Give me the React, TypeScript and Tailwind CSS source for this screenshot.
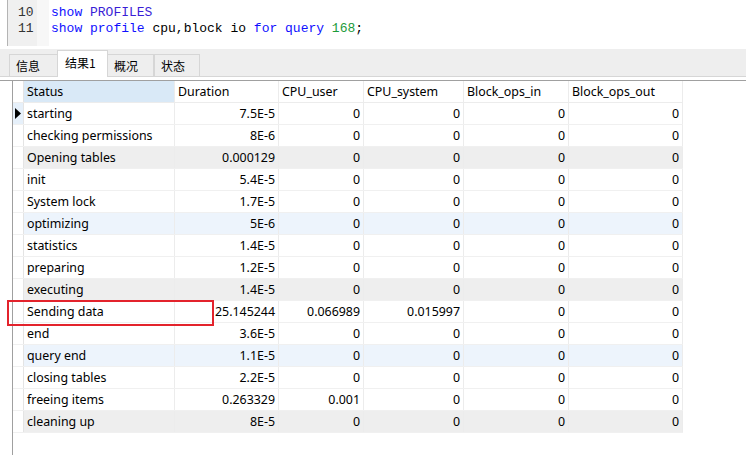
import React from 'react'

const cols = [
  { key: 'status', label: 'Status', w: 'w-[151px]' },
  { key: 'duration', label: 'Duration', w: 'w-[104px]' },
  { key: 'cpu_user', label: 'CPU_user', w: 'w-[85px]' },
  { key: 'cpu_system', label: 'CPU_system', w: 'w-[100px]' },
  { key: 'in', label: 'Block_ops_in', w: 'w-[105px]' },
  { key: 'out', label: 'Block_ops_out', w: 'w-[114px]' },
]

const rows: [string, string, string, string, string, string][] = [
  ['starting', '7.5E-5', '0', '0', '0', '0'],
  ['checking permissions', '8E-6', '0', '0', '0', '0'],
  ['Opening tables', '0.000129', '0', '0', '0', '0'],
  ['init', '5.4E-5', '0', '0', '0', '0'],
  ['System lock', '1.7E-5', '0', '0', '0', '0'],
  ['optimizing', '5E-6', '0', '0', '0', '0'],
  ['statistics', '1.4E-5', '0', '0', '0', '0'],
  ['preparing', '1.2E-5', '0', '0', '0', '0'],
  ['executing', '1.4E-5', '0', '0', '0', '0'],
  ['Sending data', '25.145244', '0.066989', '0.015997', '0', '0'],
  ['end', '3.6E-5', '0', '0', '0', '0'],
  ['query end', '1.1E-5', '0', '0', '0', '0'],
  ['closing tables', '2.2E-5', '0', '0', '0', '0'],
  ['freeing items', '0.263329', '0.001', '0', '0', '0'],
  ['cleaning up', '8E-5', '0', '0', '0', '0'],
]

function rowBg(i: number) {
  if (i % 3 !== 2) return 'bg-white'
  return (i / 3) % 2 < 1 ? 'bg-[#eeeeee]' : 'bg-[#edf4fc]'
}

function Editor() {
  return (
    <div className="flex h-[46px] font-['Liberation_Mono',monospace] text-[13px] leading-[16px]">
      <div className="w-[8px] border-r border-[#b4b4b4]" />
      <div className="w-[29px] bg-[#f0f0f0] pt-[5px] pl-[10px] text-[#333]">
        <div>10</div>
        <div>11</div>
      </div>
      <div className="w-[12px] bg-[#f7f7f7]" />
      <div className="flex-1 bg-white pt-[5px] pl-[2px]">
        <div>
          <span className="text-[#1010ff]">show </span>
          <span className="text-[#3a1ed6]">PROFILES</span>
        </div>
        <div>
          <span className="text-[#1010ff]">show profile </span>
          <span className="text-black">cpu,block io </span>
          <span className="text-[#1010ff]">for query </span>
          <span className="text-[#1c9a3a]">168</span>
          <span className="text-black">;</span>
        </div>
      </div>
    </div>
  )
}

function Tabs() {
  const tabs = ['信息', '结果1', '概况', '状态']
  return (
    <div className="mt-[3px] flex h-[28px] items-end border-b border-[#d6d6d6] bg-[#eeeeee] pl-[9px] font-['Noto_Sans_CJK_SC',sans-serif] text-[12px]">
      {tabs.map((t, i) =>
        i === 1 ? (
          <div key={t} className="-mb-px flex h-[27px] w-[51px] items-start border-x border-t border-[#d6d6d6] bg-white pt-[3px] pl-[7px] text-black">
            {t}
          </div>
        ) : (
          <div key={t} className={`flex h-[22px] items-center border border-b-0 border-[#d6d6d6] pl-[6px] text-black ${i === 0 ? 'w-[48px] border-r-0' : 'w-[46px]'} ${i === 2 ? 'border-l-0' : ''}`}>
            {t}
          </div>
        ),
      )}
    </div>
  )
}

function Grid() {
  return (
    <div className="mt-[3px] flex h-[375px] border-t border-[#a0a0a0] font-['Noto_Sans',sans-serif] text-[12.4px] text-black">
      <div className="w-[13px] border-r border-[#a0a0a0]" />
      <div>
        <div className="flex h-[22px] border-b border-[#ececec]">
          <div className="w-[11px] border-r border-[#e4e4e4] bg-white" />
          {cols.map((c, i) => (
            <div key={c.key} className={`${c.w} flex items-center border-r border-[#ececec] pt-[2px] pl-[3px] ${i === 0 ? 'bg-[#d9e9f7]' : 'bg-white'}`}>
              {c.label}
            </div>
          ))}
        </div>
        {rows.map((r, i) => (
          <div key={r[0]} className={`flex h-[22px] border-b border-[#f0f0f0] ${rowBg(i)}`}>
            <div className={`flex w-[11px] items-center border-r border-[#e4e4e4] pl-[2px] ${i === 0 ? 'bg-[#e6f0fa]' : 'bg-white'}`}>
              {i === 0 && (
                <svg width="6" height="11" viewBox="0 0 6 11">
                  <path d="M0 0 L6 5.5 L0 11 Z" fill="#000" />
                </svg>
              )}
            </div>
            {cols.map((c, j) => (
              <div key={c.key} className={`${c.w} flex items-center border-r border-[#ececec] pt-[2px] ${j === 0 ? 'pl-[3px]' : 'justify-end pr-[3px]'}`}>
                {r[j]}
              </div>
            ))}
          </div>
        ))}
      </div>
    </div>
  )
}

export default function App() {
  return (
    <div className="relative h-[455px] w-[746px] overflow-hidden bg-white">
      <Editor />
      <Tabs />
      <Grid />
      <div className="pointer-events-none absolute left-[7px] top-[300px] h-[26px] w-[207px] border-2 border-[#e3232c]" />
    </div>
  )
}
